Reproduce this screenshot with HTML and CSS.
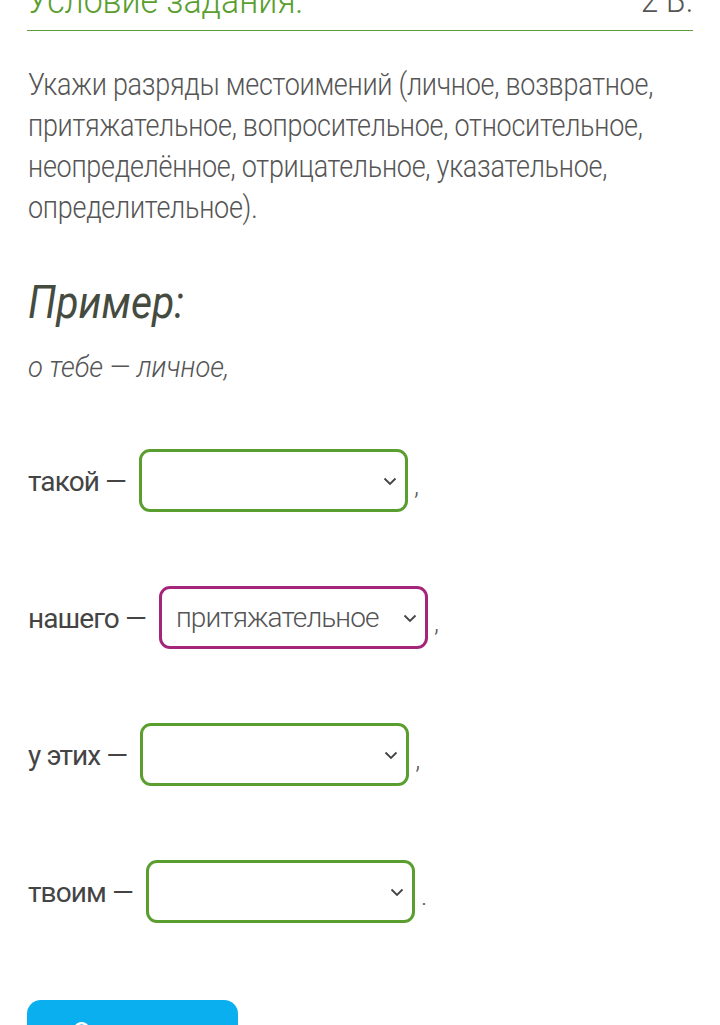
FILE: index.html
```html
<!DOCTYPE html>
<html lang="ru">
<head>
<meta charset="utf-8">
<link rel="stylesheet" href="styles.css">
</head>
<body>
<div class="page">
  <div class="head">
    <span class="head-title">Условие задания:</span>
    <span class="head-points">2 Б.</span>
  </div>
  <p class="task">Укажи разряды местоимений (личное, возвратное, притяжательное, вопросительное, относительное, неопределённое, отрицательное, указательное, определительное).</p>
  <h2 class="example-title">Пример:</h2>
  <p class="example">о тебе — личное,</p>
  <div class="row first">
    <span class="label">такой —</span>
    <div class="sel ok"><span class="val"></span><svg class="chev" width="14" height="9" viewBox="0 0 14 9"><path d="M1.5 1.5 L7 7 L12.5 1.5" fill="none" stroke="#444" stroke-width="1.8"/></svg></div>
    <span class="punct">,</span>
  </div>
  <div class="row">
    <span class="label">нашего —</span>
    <div class="sel bad"><span class="val">притяжательное</span><svg class="chev" width="14" height="9" viewBox="0 0 14 9"><path d="M1.5 1.5 L7 7 L12.5 1.5" fill="none" stroke="#444" stroke-width="1.8"/></svg></div>
    <span class="punct">,</span>
  </div>
  <div class="row">
    <span class="label">у этих —</span>
    <div class="sel ok"><span class="val"></span><svg class="chev" width="14" height="9" viewBox="0 0 14 9"><path d="M1.5 1.5 L7 7 L12.5 1.5" fill="none" stroke="#444" stroke-width="1.8"/></svg></div>
    <span class="punct">,</span>
  </div>
  <div class="row">
    <span class="label">твоим —</span>
    <div class="sel ok"><span class="val"></span><svg class="chev" width="14" height="9" viewBox="0 0 14 9"><path d="M1.5 1.5 L7 7 L12.5 1.5" fill="none" stroke="#444" stroke-width="1.8"/></svg></div>
    <span class="punct">.</span>
  </div>
  <button class="btn">Ответить</button>
</div>
</body>
</html>
```
FILE: styles.css
```css
html, body { margin: 0; padding: 0; background: #fff; }
body { overflow: hidden; height: 1025px; }
.page {
  padding: 0 27px;
  font-family: Roboto, "Noto Sans", sans-serif;
  color: #555;
}
.head {
  display: flex;
  justify-content: space-between;
  align-items: flex-end;
  height: 30px;
  border-bottom: 1px solid #5e9c3a;
}
.head-title {
  display: inline-block;
  color: #5a9e2f;
  font-weight: 300;
  font-size: 36px;
  line-height: 34px;
  transform-origin: left bottom;
  transform: translateY(-12px) scaleX(0.94);
  white-space: nowrap;
}
.head-points {
  display: inline-block;
  color: #555;
  font-weight: 300;
  font-size: 35px;
  line-height: 34px;
  transform-origin: right bottom;
  transform: translateY(-12px) scaleX(0.9);
}
.task {
  margin: 33px 0 0 1px;
  font-weight: 300;
  font-size: 31px;
  line-height: 41px;
  letter-spacing: -0.3px;
  color: #555;
  width: 750px;
  transform-origin: left top;
  transform: scaleX(0.87);
}
.example-title {
  margin: 48px 0 0 1px;
  font-family: Roboto, sans-serif;
  font-style: italic;
  font-weight: 400;
  font-size: 47px;
  line-height: 52px;
  color: #454c3f;
  transform-origin: left top;
  transform: scaleX(0.87);
}
.example {
  margin: 21px 0 0 1px;
  font-family: Roboto, sans-serif;
  font-style: italic;
  font-weight: 300;
  font-size: 30px;
  line-height: 36px;
  color: #555;
  transform-origin: left top;
  transform: scaleX(0.91);
}
.row {
  display: flex;
  align-items: center;
  height: 63px;
  margin-top: 74px;
  margin-left: 1px;
}
.row.first { margin-top: 64px; }
.label {
  font-size: 28px;
  font-weight: 400;
  letter-spacing: -0.9px;
  color: #444;
  margin-right: 13px;
  padding-top: 2px;
}
.sel {
  box-sizing: border-box;
  width: 269px;
  height: 63px;
  border: 3px solid #5a9e2f;
  border-radius: 11px;
  display: flex;
  align-items: center;
  justify-content: space-between;
  padding: 0 8px 0 14px;
}
.sel.bad { border-color: #a3267a; }
.val {
  font-size: 28px;
  font-weight: 300;
  letter-spacing: -0.9px;
  color: #555;
}
.chev { flex: none; margin-top: 2px; }
.punct {
  font-size: 26px;
  font-weight: 300;
  color: #555;
  margin-left: 6px;
  padding-top: 8px;
}
.btn {
  display: block;
  margin-top: 77px;
  width: 211px;
  height: 64px;
  border: none;
  border-radius: 14px;
  background: #0aafef;
  color: #fff;
  font-family: Roboto, sans-serif;
  font-size: 28px;
  font-weight: 400;
  padding: 0;
  text-align: center;
}
```
